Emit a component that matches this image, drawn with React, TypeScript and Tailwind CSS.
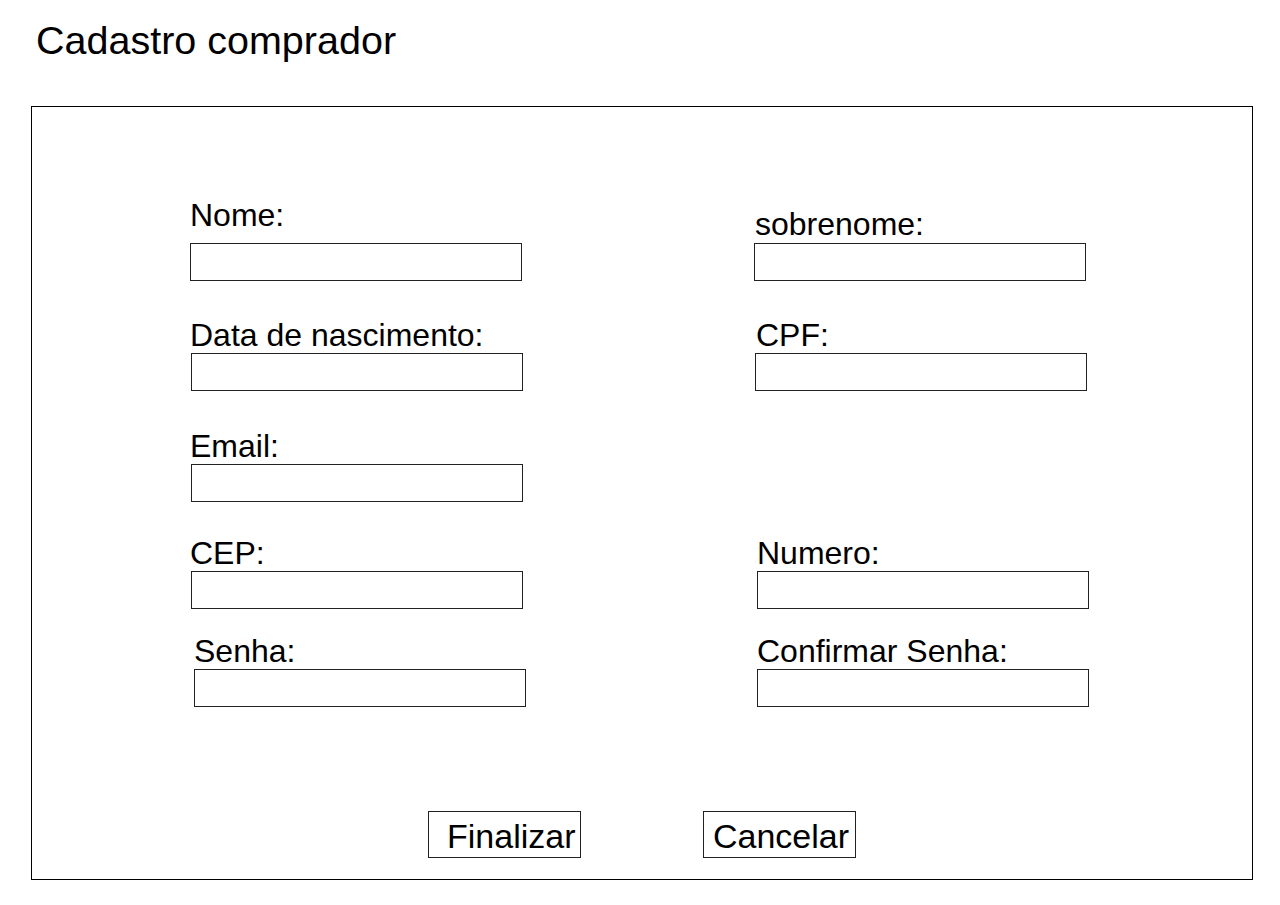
const fields = [
  { label: "Nome:", cell: "h-[90px]", labelCls: "ml-0 mb-[12px]", inputCls: "ml-0" },
  { label: "sobrenome:", cell: "h-[90px]", labelCls: "ml-[1px] mb-[3px]", inputCls: "ml-0" },
  { label: "Data de nascimento:", cell: "h-[110px]", labelCls: "ml-0 mb-[2px]", inputCls: "ml-[1px]" },
  { label: "CPF:", cell: "h-[110px]", labelCls: "ml-[2px] mb-[2px]", inputCls: "ml-[1px]" },
  { label: "Email:", cell: "h-[111px]", labelCls: "ml-0 mb-[2px]", inputCls: "ml-[1px]" },
  { label: "", cell: "h-[111px]", labelCls: "", inputCls: "" },
  { label: "CEP:", cell: "h-[107px]", labelCls: "ml-0 mb-[2px]", inputCls: "ml-[1px]" },
  { label: "Numero:", cell: "h-[107px]", labelCls: "ml-[3px] mb-[2px]", inputCls: "ml-[3px]" },
  { label: "Senha:", cell: "h-[98px]", labelCls: "ml-[4px] mb-[2px]", inputCls: "ml-[4px]" },
  { label: "Confirmar Senha:", cell: "h-[98px]", labelCls: "ml-[3px] mb-[2px]", inputCls: "ml-[3px]" },
];

export default function App() {
  return (
    <div className="min-h-screen bg-white text-black font-['Liberation_Sans',Arial,sans-serif]">
      <h1 className="pt-[21px] pl-[36px] text-[39.5px] leading-none font-normal">Cadastro comprador</h1>

      <div className="mt-[45px] ml-[31px] w-[1222px] h-[774px] border border-black">
        <div className="pt-[84px] pl-[158px] grid grid-cols-[332px_332px] gap-x-[232px]">
          {fields.map((f, i) => (
            <div key={i} className={`${f.cell} flex flex-col justify-end items-start`}>
              {f.label && (
                <>
                  <label className={`${f.labelCls} text-[32px] leading-none`}>{f.label}</label>
                  <input type="text" className={`${f.inputCls} w-[332px] h-[38px] border border-[#222] bg-white outline-none`} />
                </>
              )}
            </div>
          ))}
        </div>

        <div className="mt-[104px] pl-[396px] flex gap-[122px]">
          <button className="w-[153px] h-[47px] border border-[#222] pl-[18px] pt-[3px] text-left text-[34px] leading-none">
            Finalizar
          </button>
          <button className="w-[153px] h-[47px] border border-[#222] pl-[9px] pt-[4px] text-left text-[34px] leading-none">
            Cancelar
          </button>
        </div>
      </div>
    </div>
  );
}
